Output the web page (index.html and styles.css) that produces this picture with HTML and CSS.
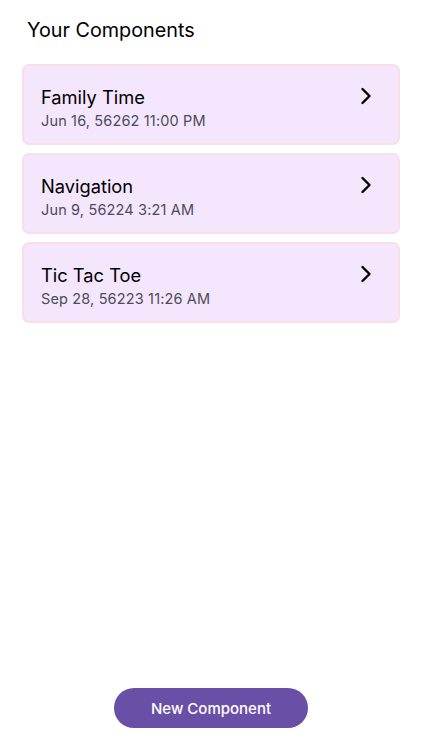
FILE: index.html
```html
<!DOCTYPE html>
<html lang="en">
<head>
    <meta charset="UTF-8">
    <meta name="viewport" content="width=device-width, initial-scale=1.0">
    <title>Your Components</title>
    <link rel="stylesheet" href="styles.css">
</head>
<body>

<div class="page">
    <h2 class="title">Your Components</h2>

    <div class="list">
        <div class="card">
            <div class="card-text">
                <div class="card-name">Family Time</div>
                <div class="card-date">Jun 16, 56262 11:00 PM</div>
            </div>
            <svg class="chevron" width="12" height="18" viewBox="0 0 12 18"><path d="M2.5 2 L9.5 9 L2.5 16" fill="none" stroke="#000" stroke-width="2.4" stroke-linecap="round" stroke-linejoin="round"/></svg>
        </div>
        <div class="card">
            <div class="card-text">
                <div class="card-name">Navigation</div>
                <div class="card-date">Jun 9, 56224 3:21 AM</div>
            </div>
            <svg class="chevron" width="12" height="18" viewBox="0 0 12 18"><path d="M2.5 2 L9.5 9 L2.5 16" fill="none" stroke="#000" stroke-width="2.4" stroke-linecap="round" stroke-linejoin="round"/></svg>
        </div>
        <div class="card">
            <div class="card-text">
                <div class="card-name">Tic Tac Toe</div>
                <div class="card-date">Sep 28, 56223 11:26 AM</div>
            </div>
            <svg class="chevron" width="12" height="18" viewBox="0 0 12 18"><path d="M2.5 2 L9.5 9 L2.5 16" fill="none" stroke="#000" stroke-width="2.4" stroke-linecap="round" stroke-linejoin="round"/></svg>
        </div>
    </div>

    <div class="bottom">
        <button type="button" class="new-btn">New Component</button>
    </div>
</div>

</body>
</html>
```

FILE: styles.css
```css
body {
    margin: 0;
    background: #fff;
    font-family: Inter, "Noto Sans", sans-serif;
    color: #000;
}

.page {
    height: 750px;
    display: flex;
    flex-direction: column;
    padding: 0 22px;
    box-sizing: border-box;
}

.title {
    margin: 17px 0 0 5px;
    font-size: 19.8px;
    font-weight: 400;
    line-height: 26px;
}

.list {
    margin-top: 21px;
    display: flex;
    flex-direction: column;
    gap: 8px;
}

.card {
    height: 81px;
    box-sizing: border-box;
    background: #f3e6fd;
    border: 2px solid #fbdfe6;
    border-radius: 7px;
    display: flex;
    align-items: flex-start;
    justify-content: space-between;
    padding: 19px 26px 0 17px;
}

.card-name {
    font-size: 18.3px;
    line-height: 24px;
}

.card-date {
    margin-top: 3px;
    font-size: 14.5px;
    line-height: 18px;
    letter-spacing: 0.15px;
    color: #4d4c5a;
}

.chevron {
    margin-top: 2px;
}

.bottom {
    margin-top: auto;
    display: flex;
    justify-content: center;
    padding-bottom: 22px;
}

.new-btn {
    width: 194px;
    height: 40px;
    border: none;
    border-radius: 20px;
    background: #6a4fa6;
    color: #fff;
    font-family: Inter, "Noto Sans", sans-serif;
    font-size: 15px;
    font-weight: 500;
}
```
